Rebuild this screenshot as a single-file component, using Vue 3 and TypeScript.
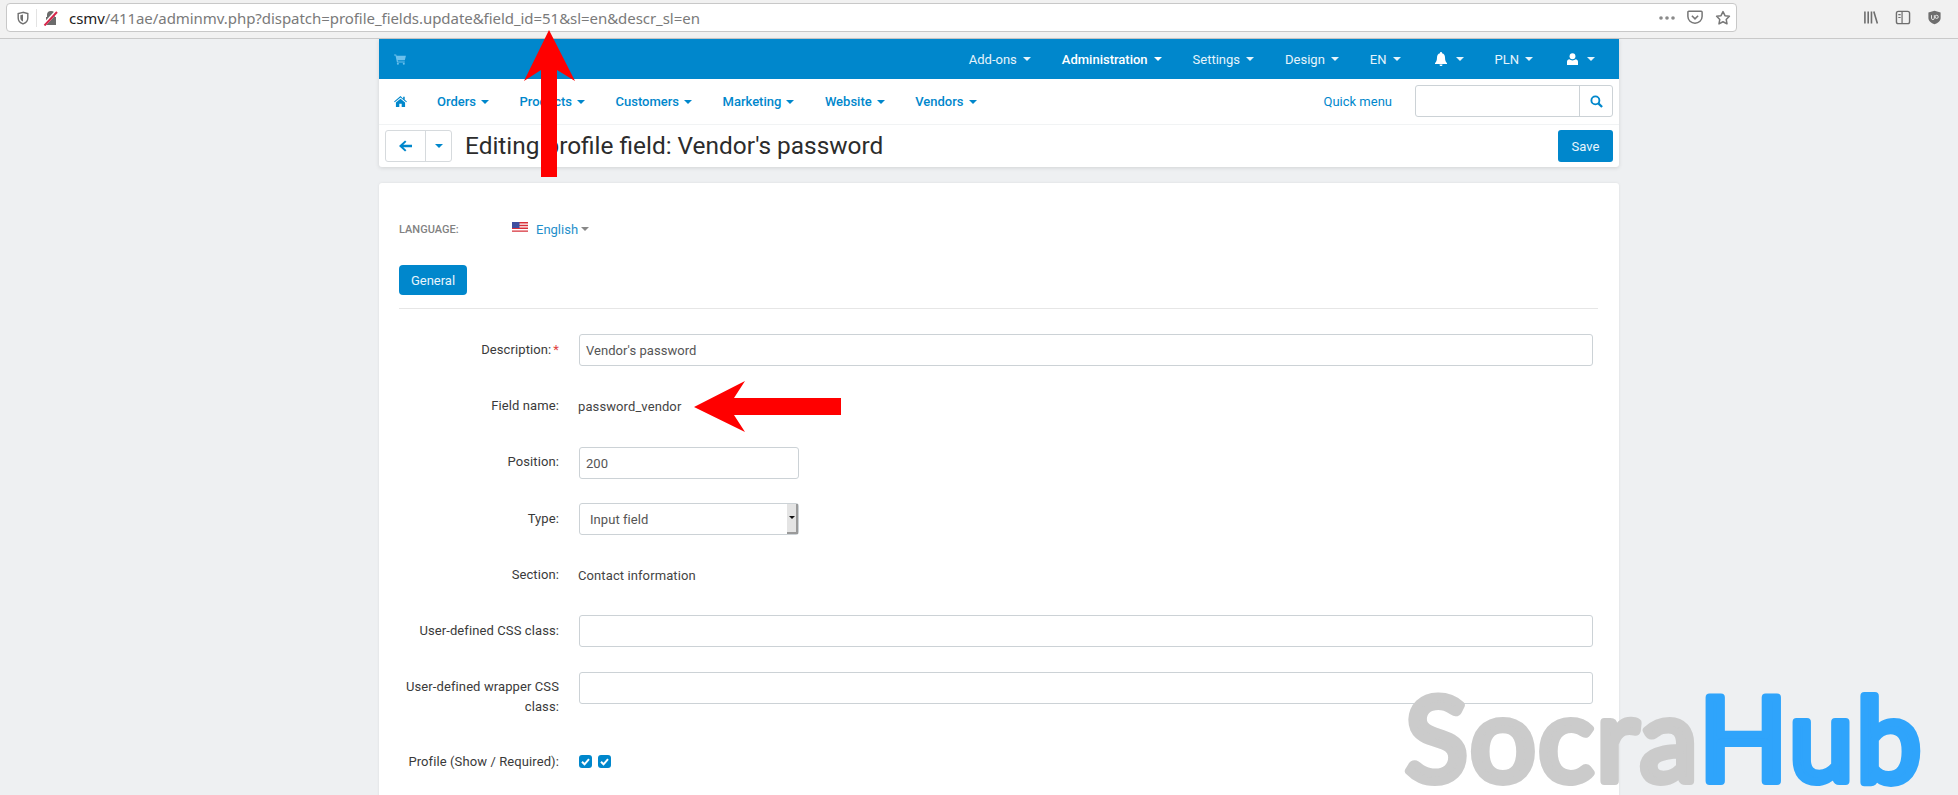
<script setup lang="ts">
interface NavItem { label: string; strong?: boolean }
const topItems: NavItem[] = [
  { label: 'Add-ons' },
  { label: 'Administration', strong: true },
  { label: 'Settings' },
  { label: 'Design' },
  { label: 'EN' },
]
const mainItems: string[] = ['Orders', 'Products', 'Customers', 'Marketing', 'Website', 'Vendors']
const url = '/411ae/adminmv.php?dispatch=profile_fields.update&field_id=51&sl=en&descr_sl=en'
</script>

<template>
  <div class="page">
    <header class="browser">
      <div class="urlbar">
        <svg class="shield" viewBox="0 0 16 16" width="16" height="16"><path d="M8 1.5 2.5 3v5c0 3.4 2.4 5.6 5.5 6.8 3.1-1.2 5.500-3.4 5.500-6.800V3z" fill="none" stroke="#6f6f6f" stroke-width="1.6"/><path d="M8 4 5 4.800V8c0 1.900 1.300 3.300 3 4.100z" fill="#6f6f6f"/></svg>
        <span class="sep"></span>
        <svg class="lock" viewBox="0 0 16 16" width="16" height="16"><path d="M4 7V5a4 4 0 0 1 8 0v2h1v8H3V7z" fill="#6b6b6b"/><path d="M1 15 14 1" stroke="#fff" stroke-width="3.4"/><path d="M1.500 15.500 14 2" stroke="#d7264b" stroke-width="2"/></svg>
        <span class="url"><b>csmv</b>{{ url }}</span>
        <span class="url-actions">
          <svg viewBox="0 0 16 4" width="16" height="4"><circle cx="2" cy="2" r="1.800" fill="#8a8a8a"/><circle cx="8" cy="2" r="1.800" fill="#8a8a8a"/><circle cx="14" cy="2" r="1.800" fill="#8a8a8a"/></svg>
          <svg viewBox="0 0 18 16" width="16" height="15"><path d="M2 1h14a1 1 0 0 1 1 1v5c0 4-3.600 7.400-8 7.400S1 11 1 7V2a1 1 0 0 1 1-1z" fill="none" stroke="#777" stroke-width="1.700"/><path d="m5.500 6 3.500 3.500L12.500 6" fill="none" stroke="#777" stroke-width="1.800"/></svg>
          <svg viewBox="0 0 18 18" width="16" height="16"><path d="m9 1.800 2.200 4.600 5 .7-3.600 3.500.9 5L9 13.200l-4.500 2.400.9-5-3.600-3.500 5-.7z" fill="none" stroke="#777" stroke-width="1.700" stroke-linejoin="round"/></svg>
        </span>
      </div>
      <div class="tools">
        <svg viewBox="0 0 16 16" width="16" height="15"><path d="M1.500 1.500v13M5 1.500v13M8.500 1.500v13M11 1.500l3.800 13" fill="none" stroke="#6e6e6e" stroke-width="1.700"/></svg>
        <svg viewBox="0 0 16 16" width="16" height="15"><rect x="1" y="1.500" width="14" height="13" rx="2" fill="none" stroke="#6e6e6e" stroke-width="1.500"/><path d="M7 1.500v13M3 5h2.500M3 8h2.500" fill="none" stroke="#6e6e6e" stroke-width="1.300"/></svg>
        <svg viewBox="0 0 16 16" width="15" height="15"><path d="M8 .8 1.500 2.600v5.600c0 3.400 2.800 5.800 6.500 7 3.700-1.200 6.500-3.600 6.500-7V2.600z" fill="#6e6e6e"/><path d="M4.800 5.500v3.200a1.500 1.500 0 0 0 3 0V5.500" fill="none" stroke="#eee" stroke-width="1"/><circle cx="10.300" cy="7.300" r="1.700" fill="none" stroke="#eee" stroke-width="1"/></svg>
      </div>
    </header>

    <main class="shell">
      <section class="head">
        <div class="topbar">
          <svg class="cart" viewBox="0 0 14 13" width="12" height="11"><path d="M0 .5h2.500l.4 1.500H14l-1.300 5.500H4.300l.3 1.300h8v1.200H3.400L1.700 1.700H0z" fill="#6cc0ec"/><circle cx="4.500" cy="11.600" r="1.200" fill="#6cc0ec"/><circle cx="11.500" cy="11.600" r="1.200" fill="#6cc0ec"/></svg>
          <nav class="topnav">
            <a v-for="i in topItems" :key="i.label" :class="{ strong: i.strong }">{{ i.label }}<i class="caret"></i></a>
            <a class="bell"><svg viewBox="0 0 12 14" width="12" height="14"><path d="M6 0a1 1 0 0 1 1 1.200C9 1.700 10 3.400 10 5.500c0 3 .8 4.500 2 5.500v1H0v-1c1.200-1 2-2.500 2-5.500C2 3.400 3 1.700 5 1.200A1 1 0 0 1 6 0zM4.500 12.600h3a1.500 1.500 0 0 1-3 0z" fill="#fff"/></svg><i class="caret wide"></i></a>
            <a>PLN<i class="caret"></i></a>
            <a class="user"><svg viewBox="0 0 12 14" width="11" height="13"><circle cx="6" cy="3.500" r="3.200" fill="#fff"/><path d="M0 13V9.500C0 7.800 1.200 6.800 2.600 6.700 3.500 7.500 4.700 8 6 8s2.500-.5 3.400-1.300c1.400.1 2.600 1.100 2.600 2.800V13z" fill="#fff"/></svg><i class="caret wide"></i></a>
          </nav>
        </div>
        <div class="mainbar">
          <svg class="home" viewBox="0 0 14 12" width="13" height="11"><path d="M7 0 0 6l.7.8L7 1.500l6.300 5.300.7-.8-2.400-2V.8h-1.700v2.100zM2 7.200V12h3.700V8.500h2.600V12H12V7.200L7 3z" fill="#0087cc"/></svg>
          <nav class="mainnav">
            <a v-for="m in mainItems" :key="m">{{ m }}<i class="caret"></i></a>
          </nav>
          <a class="quick">Quick menu</a>
          <div class="search">
            <span class="search-field"></span>
            <span class="search-btn"><svg viewBox="0 0 14 14" width="13" height="13"><circle cx="5.800" cy="5.800" r="4.300" fill="none" stroke="#0087cc" stroke-width="2"/><path d="m9 9 4 4" stroke="#0087cc" stroke-width="2.400"/></svg></span>
          </div>
        </div>
        <div class="titlebar">
          <div class="backgroup">
            <span class="back"><svg viewBox="0 0 14 12" width="13" height="12"><path d="M6.500 0 8 1.500 4.600 4.700H14v2.600H4.600L8 10.500 6.500 12 0 6z" fill="#0087cc"/></svg></span>
            <span class="more"><i class="caret"></i></span>
          </div>
          <h1>Editing profile field: Vendor's password</h1>
          <button class="save">Save</button>
        </div>
      </section>

      <section class="card">
        <div class="language">
          <span class="lang-label">LANGUAGE:</span>
          <svg class="flag" viewBox="0 0 16 11" width="16" height="11"><rect width="16" height="11" fill="#fff"/><path d="M0 0h16v1.400H0zM0 2.800h16v1.400H0zM0 5.600h16V7H0zM0 8.400h16v1.400H0z" fill="#d8303a"/><rect width="7.500" height="6" fill="#3f4f9f"/></svg>
          <a class="lang-value">English<i class="caret"></i></a>
        </div>
        <div class="tabs"><span class="tab">General</span></div>

        <div class="row">
          <label>Description:<em>*</em></label>
          <span class="input wide">Vendor's password</span>
        </div>
        <div class="row">
          <label>Field name:</label>
          <span class="static">password_vendor</span>
        </div>
        <div class="row">
          <label>Position:</label>
          <span class="input short">200</span>
        </div>
        <div class="row">
          <label>Type:</label>
          <span class="input short select">Input field<span class="arrow"><i></i></span></span>
        </div>
        <div class="row">
          <label>Section:</label>
          <span class="static">Contact information</span>
        </div>
        <div class="row">
          <label>User-defined CSS class:</label>
          <span class="input wide"></span>
        </div>
        <div class="row tall">
          <label>User-defined wrapper CSS class:</label>
          <span class="input wide"></span>
        </div>
        <div class="row">
          <label>Profile (Show / Required):</label>
          <span class="checks">
            <svg v-for="n in 2" :key="n" viewBox="0 0 13 13" width="13" height="13"><rect width="13" height="13" rx="3" fill="#0087cc"/><path d="m3 6.800 2.500 2.500L10 4.200" fill="none" stroke="#fff" stroke-width="2"/></svg>
          </span>
        </div>
      </section>
    </main>

    <svg class="arrows" viewBox="0 0 1958 795" width="1958" height="795">
      <path d="M549 30 575 81 557 70V177H541V70L524 81Z" fill="#ff0000"/>
      <path d="M694 407 745 381 734 398H841V415H734L745 432Z" fill="#ff0000"/>
      <text class="mark" x="1405" y="781">Socra<tspan class="mark-hub">Hub</tspan></text>
    </svg>
  </div>
</template>

<style>
html, body { margin: 0; background: #eef0f2; }
</style>

<style scoped>
.page { position: relative; width: 1958px; height: 795px; overflow: hidden; background: #eef0f2; font-family: Roboto, "Liberation Sans", sans-serif; font-size: 13px; color: #333; }
a { cursor: pointer; }

.browser { height: 38px; box-sizing: content-box; background: #f1f1f1; border-bottom: 1px solid #c9c9c9; display: flex; align-items: flex-start; }
.urlbar { margin: 3px 0 0 6px; width: 1731px; height: 29px; box-sizing: border-box; background: #fff; border: 1px solid #c8c8c8; border-radius: 4px; display: flex; align-items: center; padding-left: 9px; }
.shield { flex: none; width: 14px; height: 16px; }
.sep { width: 1px; height: 18px; background: #e3e3e3; margin: 0 6px 0 6px; }
.lock { flex: none; margin-right: 10px; }
.url { font-family: "Noto Sans", sans-serif; font-size: 15px; color: #7a7a7a; white-space: nowrap; letter-spacing: -0.05px; }
.url b { font-weight: 400; color: #222; }
.url-actions { margin-left: auto; display: flex; align-items: center; gap: 12px; padding-right: 5px; }
.tools { margin: 10px 0 0 auto; padding-right: 16px; display: flex; gap: 16px; align-items: center; }

.shell { width: 1240px; margin-left: 379px; }
.head { background: #fff; box-shadow: 0 1px 4px rgba(0,0,0,.12); border-radius: 0 0 3px 3px; }
.topbar { height: 40px; background: #0087cc; display: flex; align-items: center; padding: 0 24px 0 15px; }
.topnav { margin-left: auto; display: flex; align-items: center; gap: 31px; color: #e6f4fb; }
.topnav a { display: flex; align-items: center; white-space: nowrap; }
.topnav .caret { margin-left: 6px; }
.topnav .caret.wide { margin-left: 9px; }
.topnav .bell { margin-left: 3px; }
.topnav .user { margin-left: 3px; }
.topnav .strong { color: #fff; font-weight: 500; }
.caret { display: inline-block; width: 0; height: 0; margin-left: 5px; border-left: 4px solid transparent; border-right: 4px solid transparent; border-top: 4px solid currentColor; }

.mainbar { height: 46px; box-sizing: border-box; border-bottom: 1px solid #f1f3f4; display: flex; align-items: center; padding: 0 6px 0 15px; color: #0087cc; }
.mainnav { display: flex; margin-left: 30px; gap: 30.5px; font-weight: 500; }
.mainnav a { display: flex; align-items: center; white-space: nowrap; }
.quick { margin-left: auto; margin-right: 23px; }
.search { display: flex; width: 198px; height: 32px; margin-top: -1px; box-sizing: border-box; border: 1px solid #ccd2d6; border-radius: 3px; }
.search-field { flex: 1; }
.search-btn { width: 32px; border-left: 1px solid #ccd2d6; display: flex; align-items: center; justify-content: center; }

.titlebar { height: 42px; display: flex; align-items: center; padding: 0 6px 0 6px; }
.backgroup { display: flex; height: 32px; box-sizing: border-box; border: 1px solid #d6dadd; border-radius: 3px; color: #0087cc; }
.back { width: 39px; display: flex; align-items: center; justify-content: center; }
.more { width: 25px; border-left: 1px solid #d6dadd; display: flex; align-items: center; justify-content: center; }
.more .caret { margin: 0; }
h1 { margin: 0 0 2px 13px; font-size: 24.4px; font-weight: 400; color: #2c2c2c; white-space: nowrap; }
.save { margin-left: auto; width: 55px; height: 32px; border: 0; border-radius: 3px; background: #0087cc; color: #e8f5fc; font: 13px Roboto, sans-serif; }

.card { margin-top: 16px; background: #fff; border-radius: 3px; box-shadow: 0 0 3px rgba(0,0,0,.08); padding: 39px 26px 40px 20px; height: 700px; box-sizing: border-box; }
.language { display: flex; align-items: center; height: 14px; }
.lang-label { width: 113px; font-size: 11px; font-weight: 500; color: #828282; }
.flag { margin-right: 8px; margin-top: -3px; }
.lang-value { color: #1f8fcb; display: flex; align-items: center; }
.lang-value .caret { margin-left: 3px; color: #888; }
.tabs { margin-top: 29px; padding-bottom: 13px; border-bottom: 1px solid #e6e6e6; margin-bottom: 25px; margin-right: -5px; }
.tab { display: flex; align-items: center; justify-content: center; width: 68px; height: 30px; background: #0087cc; color: #e8f5fc; border-radius: 4px; }

.row { display: grid; grid-template-columns: 160px 1fr; column-gap: 20px; min-height: 32px; margin-bottom: 24.3px; align-items: start; }
.row label { text-align: right; line-height: 20px; padding-top: 5.7px; color: #3a3a3a; letter-spacing: .1px; }
.row em { color: #e04040; font-style: normal; margin-left: 2px; }
.row.tall label { padding-bottom: 5px; }
.input { display: block; height: 32px; box-sizing: border-box; border: 1px solid #ccd2d6; border-radius: 3px; padding: 0 6px; line-height: 31px; color: #555; letter-spacing: .05px; }
.input.wide { width: 1014px; }
.input.short { width: 220px; }
.input.select { position: relative; padding-left: 10px; }
.arrow { position: absolute; right: 0; top: 0; bottom: 0; width: 11px; background: #e4e4e4; border-right: 2px solid #9a9a9a; border-bottom: 2px solid #9a9a9a; box-sizing: border-box; display: flex; align-items: center; justify-content: center; }
.arrow i { border-left: 3px solid transparent; border-right: 3px solid transparent; border-top: 3px solid #111; }
.static { line-height: 20px; padding-top: 6.7px; color: #444; letter-spacing: .1px; margin-left: -1px; }
.checks { display: flex; gap: 6px; padding-top: 8px; }

.arrows { position: absolute; left: 0; top: 0; pointer-events: none; }
.mark { font-family: Lato, sans-serif; font-size: 116px; font-weight: 400; letter-spacing: 2.5px; fill: #cbcbcb; stroke: #cbcbcb; stroke-width: 8px; stroke-linejoin: round; }
.mark-hub { fill: #2fa4fb; stroke: #2fa4fb; }
</style>
